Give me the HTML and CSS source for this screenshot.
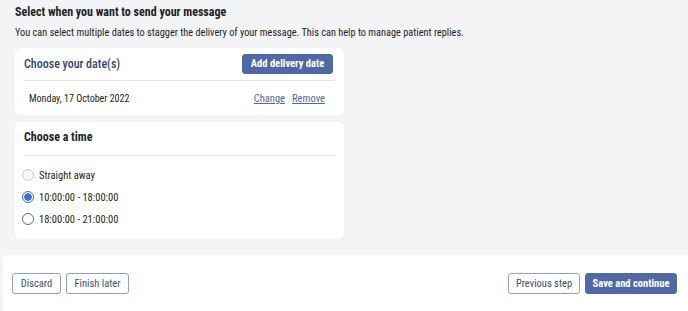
FILE: index.html
```html
<!DOCTYPE html>
<html lang="en">
<head>
<meta charset="utf-8">
<link rel="stylesheet" href="styles.css">
</head>
<body>
<div class="page">
  <main class="content">
    <h1 class="title">Select when you want to send your message</h1>
    <p class="intro">You can select multiple dates to stagger the delivery of your message. This can help to manage patient replies.</p>
    <section class="card">
      <div class="card-head">
        <h2 class="card-title blue">Choose your date(s)</h2>
        <button class="btn btn-primary">Add delivery date</button>
      </div>
      <div class="date-row">
        <span class="date">Monday, 17 October 2022</span>
        <span class="links"><a href="#" class="link">Change</a><a href="#" class="link">Remove</a></span>
      </div>
    </section>
    <section class="card time-card">
      <div class="card-head plain">
        <h2 class="card-title">Choose a time</h2>
      </div>
      <div class="radios">
        <label class="radio"><span class="dot disabled"></span>Straight away</label>
        <label class="radio"><span class="dot checked"></span>10:00:00 - 18:00:00</label>
        <label class="radio"><span class="dot"></span>18:00:00 - 21:00:00</label>
      </div>
    </section>
  </main>
  <footer class="footer">
    <div class="group">
      <button class="btn btn-outline w-discard">Discard</button>
      <button class="btn btn-outline w-finish">Finish later</button>
    </div>
    <div class="group">
      <button class="btn btn-outline w-prev">Previous step</button>
      <button class="btn btn-primary w-save">Save and continue</button>
    </div>
  </footer>
</div>
</body>
</html>
```

FILE: styles.css
```css
* { box-sizing: border-box; }
html, body { margin: 0; padding: 0; }
body {
  background: #f3f4f6;
  font-family: "Roboto Condensed", "Roboto", sans-serif;
  color: #1d1f24;
  width: 688px;
  height: 311px;
  overflow: hidden;
}
.page { display: flex; flex-direction: column; height: 311px; }
.content { padding: 4px 0 0 15px; flex: 1; }
.title { font-size: 12px; font-weight: 700; margin: 0; line-height: 16px; color: #1d1f24; }
.intro { font-size: 10.3px; margin: 6px 0 0; line-height: 14px; }
.card {
  width: 329px;
  background: #fff;
  border-radius: 6px;
  margin-top: 8px;
  padding: 0 9px;
}
.card-head {
  display: flex; justify-content: space-between; align-items: center;
  height: 33px; padding-top: 6px; padding-bottom: 7px; padding-right: 2px;
  border-bottom: 1px solid #e3e5e9;
}
.card-head.plain { height: 34px; padding-top: 0; padding-bottom: 4px; }
.card-title { margin: 0; font-size: 12px; font-weight: 700; }
.card-title.blue { color: #35476b; font-weight: 500; }
.btn {
  font-family: inherit; font-size: 10.5px; height: 20px; border-radius: 3px;
  padding: 0; cursor: pointer; line-height: 18px; text-align: center;
}
.card-head .btn { width: 91px; }
.btn-primary { background: #4f69a6; color: #fff; border: 1px solid #4f69a6; font-weight: 700; }
.btn-outline { background: #fff; color: #3c4f7c; border: 1px solid #8ea2cf; }
.date-row { display: flex; justify-content: space-between; align-items: center; height: 34px; padding: 0 10px 0 5px; }
.date { font-size: 10px; }
.links { display: flex; gap: 7px; }
.link { font-size: 10.5px; color: #4f69a6; text-decoration: underline; }
.time-card { margin-top: 7px; height: 117px; }
.radios { display: flex; flex-direction: column; gap: 10px; padding-top: 13px; }
.radio { display: flex; align-items: center; gap: 5px; font-size: 10.5px; height: 12px; margin-left: -2px; }
.dot { width: 12px; height: 12px; border-radius: 50%; border: 1px solid #6b6f76; display: inline-block; background: #fff; flex: none; }
.dot.disabled { border-color: #c9cbce; background: #f7f7f7; }
.dot.checked { border: 1px solid #3b6fe8; background: radial-gradient(circle, #3b6fe8 0 3.5px, #fff 4px); }
.footer {
  background: #fff; height: 56px; margin-left: 3px; border-top-left-radius: 6px;
  display: flex; justify-content: space-between; align-items: center;
  padding: 0 11px 0 9px;
}
.footer .btn { height: 21px; line-height: 19px; }
.group { display: flex; gap: 5px; }
.w-discard { width: 49px; }
.w-finish { width: 63px; }
.w-prev { width: 72px; }
.w-save { width: 92px; }
```
